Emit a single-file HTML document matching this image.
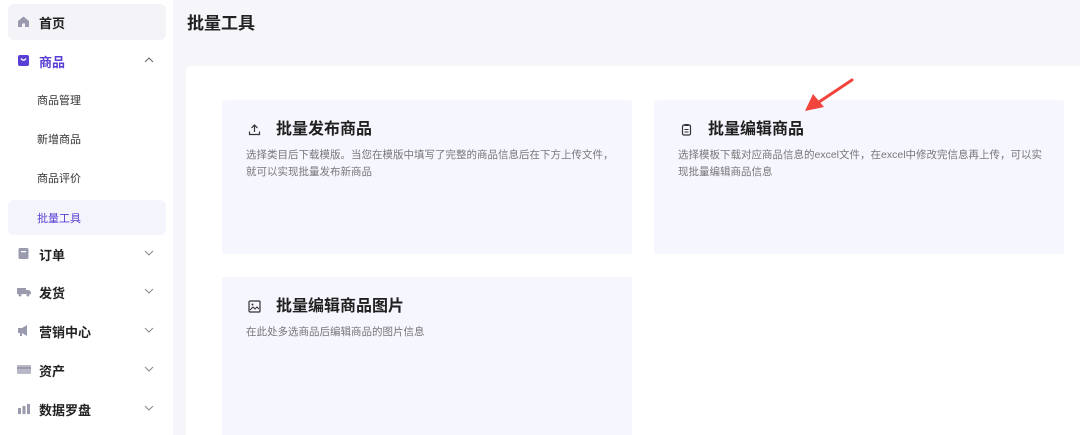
<!DOCTYPE html>
<html><head><meta charset="utf-8"><style>
*{margin:0;padding:0;box-sizing:border-box}
html,body{width:1080px;height:435px;overflow:hidden}
body{background:#f6f6fa;font-family:"Liberation Sans","Noto Sans CJK SC",sans-serif;position:relative}
.side{position:absolute;left:0;top:0;width:173px;height:435px;background:#fff}
.item{position:absolute;left:8px;width:158px;height:36px;border-radius:6px;display:flex;align-items:center;font-size:13px;font-weight:bold;color:#222}
.item svg.ic{position:absolute;left:9px;top:11px}
.item .t{position:absolute;left:31px}
.item .ch{position:absolute;left:136px;top:13px}
.sub{position:absolute;left:37px;font-size:11px;color:#333}
.main{position:absolute;left:186px;top:66px;width:900px;height:380px;background:#fff;border-radius:6px}
h1{position:absolute;left:187px;top:9px;font-size:17px;font-weight:bold;color:#222}
.card{position:absolute;width:410px;background:#f6f6fe;border-radius:3px}
.card .ti{position:absolute;left:54px;top:15px;font-size:16px;font-weight:bold;color:#1f1f1f}
.card .ds{position:absolute;left:24px;top:47px;font-size:10.5px;line-height:17px;color:#777}
.card svg{position:absolute;left:26px;top:23px}
</style></head><body>
<div class="side">
  <div class="item" style="top:4px;background:#f4f4f8"><svg class="ic" width="13" height="13" viewBox="0 0 13 13"><path d="M1 6L6.5 1.5L12 6V12H8V8.5H5V12H1Z" fill="#9a9aae"/></svg><span class="t">首页</span></div>
  <div class="item" style="top:43px;color:#5a3fd6"><svg class="ic" width="13" height="13" viewBox="0 0 13 13"><rect x="1" y="1" width="11" height="11" rx="2" fill="#5a3fd6"/><path d="M4 4.5Q6.5 8 9 4.5" stroke="#fff" stroke-width="1.3" fill="none"/></svg><span class="t">商品</span><svg class="ch" width="10" height="8"><path d="M1 6L5 2L9 6" stroke="#666" fill="none"/></svg></div>
  <div class="sub" style="top:92px">商品管理</div>
  <div class="sub" style="top:131px">新增商品</div>
  <div class="sub" style="top:170px">商品评价</div>
  <div class="item" style="top:200px;height:35px;background:#f4f4fc;color:#5a3fd6;font-size:11px;font-weight:normal"><span class="t" style="left:29px">批量工具</span></div>
  <div class="item" style="top:236px"><svg class="ic" width="13" height="13" viewBox="0 0 13 13"><rect x="1.5" y="1" width="10" height="11" rx="1.5" fill="#9a9aae"/><rect x="4" y="4" width="5" height="1.3" fill="#fff"/></svg><span class="t">订单</span><svg class="ch" width="10" height="8"><path d="M1 2L5 6L9 2" stroke="#888" fill="none"/></svg></div>
  <div class="item" style="top:274px"><svg class="ic" width="14" height="13" viewBox="0 0 14 13"><rect x="0" y="3" width="9" height="6" fill="#9a9aae"/><path d="M9 5H12L14 7V9H9Z" fill="#9a9aae"/><circle cx="3" cy="10" r="1.5" fill="#9a9aae"/><circle cx="11" cy="10" r="1.5" fill="#9a9aae"/></svg><span class="t">发货</span><svg class="ch" width="10" height="8"><path d="M1 2L5 6L9 2" stroke="#888" fill="none"/></svg></div>
  <div class="item" style="top:313px"><svg class="ic" width="13" height="13" viewBox="0 0 13 13"><path d="M1 4H5L10 1V12L5 9H1Z" fill="#9a9aae"/><rect x="3" y="9" width="2" height="3" fill="#9a9aae"/></svg><span class="t">营销中心</span><svg class="ch" width="10" height="8"><path d="M1 2L5 6L9 2" stroke="#888" fill="none"/></svg></div>
  <div class="item" style="top:352px"><svg class="ic" width="14" height="13" viewBox="0 0 14 13"><rect x="0" y="2" width="14" height="9" rx="1" fill="#b8b8c8"/><rect x="0" y="4" width="14" height="2" fill="#9a9aae"/></svg><span class="t">资产</span><svg class="ch" width="10" height="8"><path d="M1 2L5 6L9 2" stroke="#888" fill="none"/></svg></div>
  <div class="item" style="top:391px"><svg class="ic" width="14" height="13" viewBox="0 0 14 13"><rect x="1" y="6" width="3" height="6" fill="#9a9aae"/><rect x="5.5" y="4" width="3" height="8" fill="#9a9aae"/><rect x="10" y="2" width="3" height="10" fill="#9a9aae"/></svg><span class="t">数据罗盘</span><svg class="ch" width="10" height="8"><path d="M1 2L5 6L9 2" stroke="#888" fill="none"/></svg></div>
</div>
<h1>批量工具</h1>
<div class="main"></div>
<div class="card" style="left:222px;top:100px;height:154px">
  <svg width="13" height="13" viewBox="0 0 13 13"><path d="M6.5 9V2M3.5 5L6.5 2L9.5 5M1.5 8.5V11.5H11.5V8.5" stroke="#333" stroke-width="1.2" fill="none"/></svg>
  <div class="ti">批量发布商品</div>
  <div class="ds">选择类目后下载模版。当您在模版中填写了完整的商品信息后在下方上传文件，<br>就可以实现批量发布新商品</div>
</div>
<div class="card" style="left:654px;top:100px;height:154px">
  <svg width="13" height="13" viewBox="0 0 13 13"><rect x="2.5" y="2" width="8" height="10" rx="1.5" stroke="#333" stroke-width="1.2" fill="none"/><rect x="4.5" y="1" width="4" height="2" fill="#333"/><path d="M4.5 6.5H8.5M4.5 9H8.5" stroke="#333"/></svg>
  <div class="ti">批量编辑商品</div>
  <div class="ds">选择模板下载对应商品信息的excel文件，在excel中修改完信息再上传，可以实<br>现批量编辑商品信息</div>
</div>
<div class="card" style="left:222px;top:277px;height:160px">
  <svg width="13" height="13" viewBox="0 0 13 13"><rect x="1" y="1" width="11" height="11" rx="1" stroke="#333" stroke-width="1.2" fill="none"/><circle cx="4.5" cy="4.5" r="1" fill="#333"/><path d="M2 10L5 7L7 9L9 7L11 9" stroke="#333" fill="none"/></svg>
  <div class="ti">批量编辑商品图片</div>
  <div class="ds">在此处多选商品后编辑商品的图片信息</div>
</div>
<svg style="position:absolute;left:800px;top:76px" width="60" height="40" viewBox="0 0 60 40"><path d="M52 4L16 28" stroke="#f0443c" stroke-width="3" stroke-linecap="round"/><path d="M5 35L13 18L24 31Z" fill="#f0443c"/></svg>
</body></html>
